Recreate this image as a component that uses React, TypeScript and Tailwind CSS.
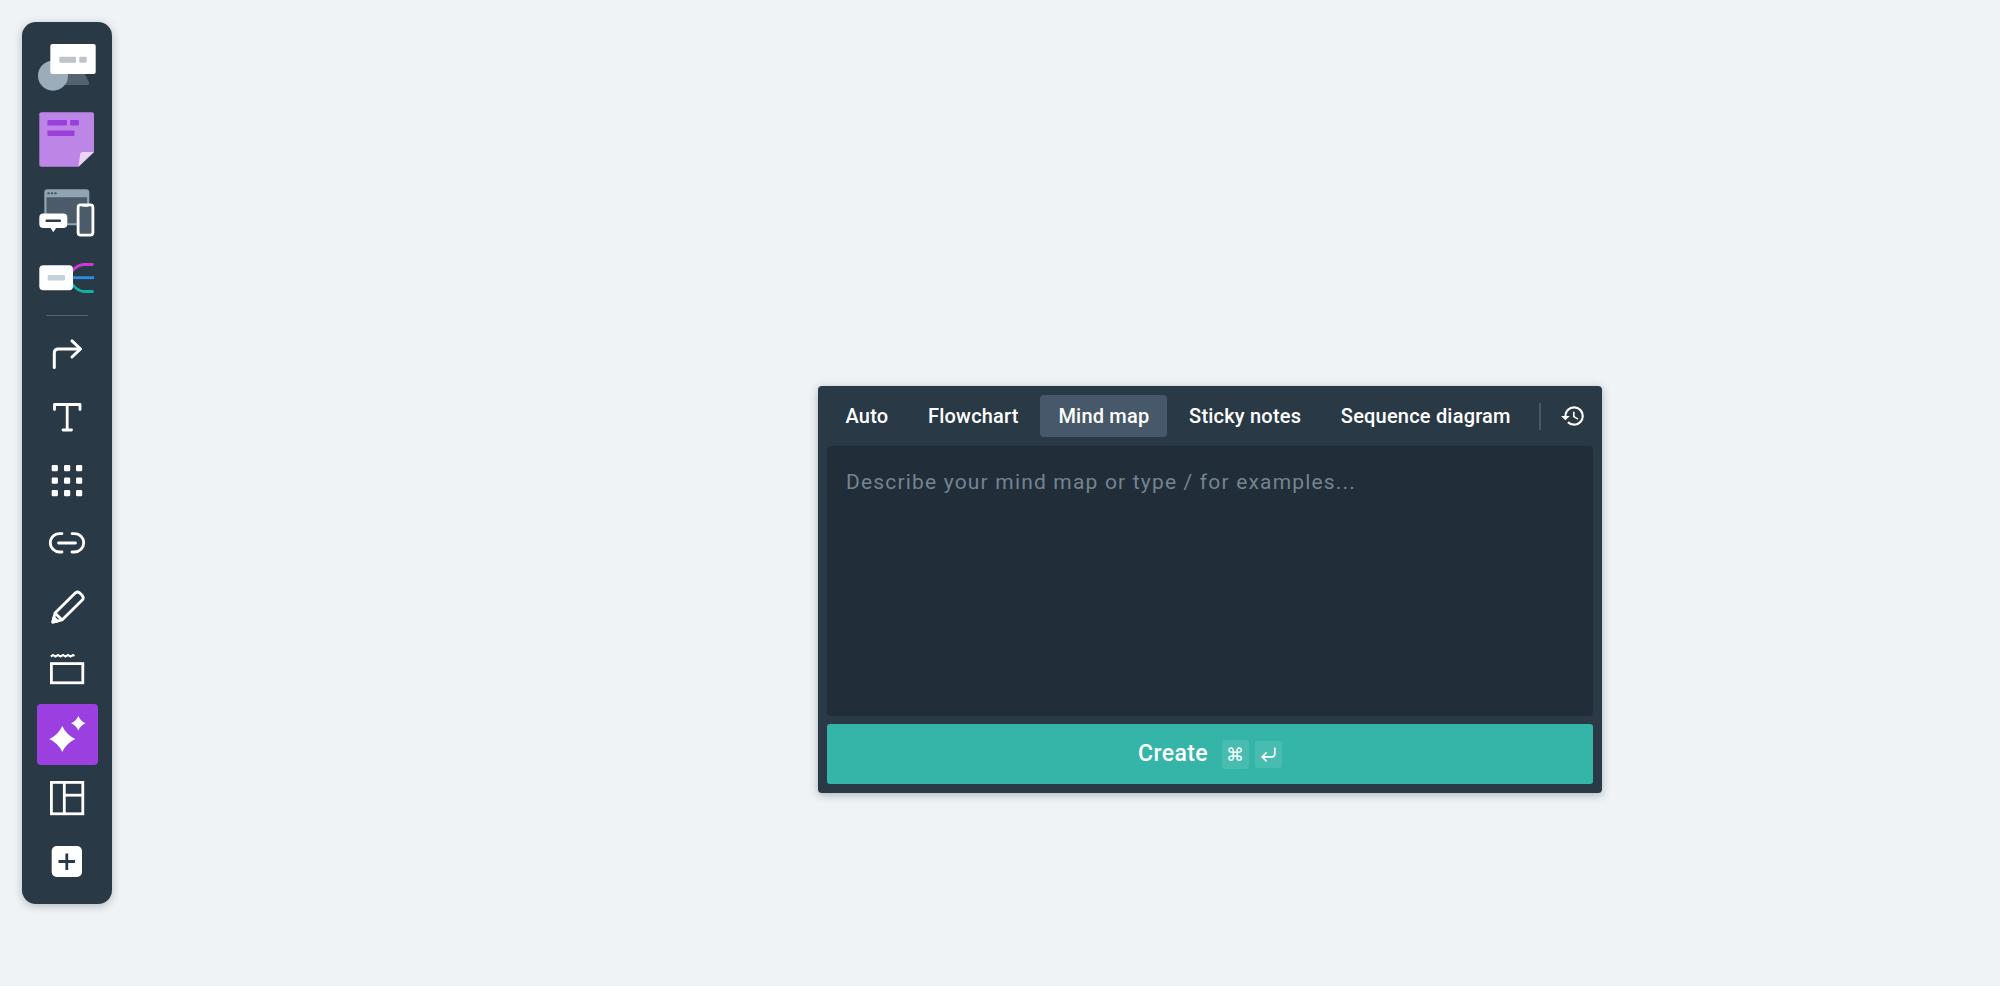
import { CornerDownLeft } from "lucide-react";
import { MdHistory } from "react-icons/md";

const tabs = ["Auto", "Flowchart", "Mind map", "Sticky notes", "Sequence diagram"];

function ShapesIcon() {
  return (
    <svg viewBox="37 43 60 48" className="block h-[48px] w-[60px]">
      <path d="M64 72 H84 L89 82.5 Q89.6 85 87 85 H64 Z" fill="#536370" />
      <circle cx="53" cy="75.7" r="15" fill="#9badba" />
      <rect x="50.3" y="44" width="45.4" height="30" rx="2" fill="#fff" />
      <rect x="59.3" y="56.7" width="16.7" height="6" rx="1" fill="#bdc4ca" />
      <rect x="79.3" y="56.7" width="7.4" height="6" rx="1" fill="#bdc4ca" />
    </svg>
  );
}

function StickyIcon() {
  return (
    <svg viewBox="37 112 60 55" className="mt-[21px] block h-[55px] w-[60px]">
      <path d="M41.3 112.3 H92 a2 2 0 0 1 2 2 V152 L78.5 166.7 H41.3 a2 2 0 0 1 -2 -2 V114.3 a2 2 0 0 1 2 -2 Z" fill="#bd86e6" />
      <path d="M94 152 L78.5 166.7 L80 155 Q80.3 152 83 152 Z" fill="#ecd4f8" />
      <rect x="47.3" y="120" width="19.7" height="5.6" rx="1" fill="#9a3fdb" />
      <rect x="70" y="120" width="9" height="5.6" rx="1" fill="#9a3fdb" />
      <rect x="47.3" y="130.5" width="27.2" height="5.6" rx="1" fill="#9a3fdb" />
    </svg>
  );
}

function DevicesIcon() {
  return (
    <svg viewBox="37 189 60 47.5" className="mt-[22px] block h-[48px] w-[60px]">
      <rect x="44.3" y="189" width="45" height="36" rx="3" fill="#91a4b3" />
      <rect x="46.5" y="197" width="40.6" height="26" fill="#4b5b69" />
      <circle cx="48.5" cy="193" r="1.2" fill="#4b5b69" />
      <circle cx="52" cy="193" r="1.2" fill="#4b5b69" />
      <circle cx="55.5" cy="193" r="1.2" fill="#4b5b69" />
      <rect x="78.1" y="204.7" width="14.8" height="30.1" rx="2.5" fill="#4b5b69" stroke="#fff" strokeWidth="2.8" />
      <rect x="82.5" y="204.5" width="6" height="2" fill="#fff" />
      <rect x="39.3" y="213.3" width="28" height="14.4" rx="4" fill="#fff" />
      <path d="M50 227 L53.3 232 L56.6 227 Z" fill="#fff" />
      <rect x="45.5" y="219.2" width="15.5" height="2.6" rx="1" fill="#2c3b48" />
    </svg>
  );
}

function MindMapIcon() {
  return (
    <svg viewBox="37 262 60 30" className="mt-[26px] block h-[30px] w-[60px]">
      <path d="M72 270 Q78 263.5 84 263.5 H93.5" fill="none" stroke="#d136d6" strokeWidth="2.8" />
      <path d="M72 276.7 H94" fill="none" stroke="#2a8fe8" strokeWidth="2.8" />
      <path d="M72 283 Q78 290.5 84 290.5 H93.5" fill="none" stroke="#10b3a3" strokeWidth="2.8" />
      <rect x="39.3" y="264.3" width="33.7" height="25" rx="4" fill="#fff" />
      <rect x="47.7" y="274" width="17.3" height="5.6" rx="1" fill="#c5d0dc" />
    </svg>
  );
}

function ArrowIcon() {
  return (
    <svg viewBox="37 322 60 60" className="block h-[60px] w-[60px]" fill="none" stroke="#fff" strokeWidth="3" strokeLinecap="round" strokeLinejoin="round">
      <path d="M54.3 366.5 V352 Q54.3 348 58.3 348 H80" />
      <path d="M72 339.8 L80.5 348 L72 356" />
    </svg>
  );
}

function TextIcon() {
  return (
    <svg viewBox="37 386 60 60" className="block h-[60px] w-[60px]" fill="none" stroke="#fff" strokeWidth="2.8" strokeLinecap="round" strokeLinejoin="round">
      <path d="M54.5 409.5 V404.5 H80 V409.5" />
      <path d="M67.2 404.5 V429.5" />
      <path d="M63 430 H71.5" />
    </svg>
  );
}

function GridIcon() {
  const spots = [51.7, 64, 76];
  const rows = [465, 477.5, 490];
  return (
    <svg viewBox="37 450 60 60" className="block h-[60px] w-[60px]" fill="#fff">
      {rows.map((y) =>
        spots.map((x) => <rect key={`${x}-${y}`} x={x} y={y} width="6.2" height="6.2" rx="1.2" />)
      )}
    </svg>
  );
}

function LinkIcon() {
  return (
    <svg viewBox="37 514 60 60" className="block h-[60px] w-[60px]" fill="none" stroke="#fff" strokeWidth="2.8" strokeLinecap="round">
      <path d="M62 534.6 H59.5 a9.2 9.2 0 0 0 0 18.4 H62" />
      <path d="M72 534.6 H74.5 a9.2 9.2 0 0 1 0 18.4 H72" />
      <path d="M58.5 544 H75.5" />
    </svg>
  );
}

function PencilIcon() {
  return (
    <svg viewBox="37 577 60 60" className="block h-[60px] w-[60px]" fill="none" stroke="#fff" strokeWidth="2.8" strokeLinejoin="round">
      <path d="M52.8 622.2 L55 613 L75.5 592.8 Q77.5 591.2 79.5 592.8 L82.5 595.8 Q84 597.8 82.5 599.8 L62 620 Z" />
      <path d="M55 613 L62 620" />
      <path d="M52.8 622.2 L53.8 617.6 L57.4 621.1 Z" fill="#fff" />
    </svg>
  );
}

function FrameIcon() {
  return (
    <svg viewBox="37 641 60 60" className="block h-[60px] w-[60px]" fill="none" stroke="#fff" strokeWidth="2.8">
      <rect x="51.4" y="664.6" width="31.4" height="19.2" />
      <path d="M50.8 657.6 L53 656 L55.5 657.6 L58 656 L60.5 657.6 L63 656 L65.5 657.6 L68 656 L70.5 657.6 L73 656 L74.5 657" strokeWidth="2" />
    </svg>
  );
}

function SparkIcon() {
  return (
    <svg viewBox="37 704 60 60" className="block h-[60px] w-[60px]" fill="#fff">
      <path d="M62.3 726 Q66.4 734.9 75.3 739 Q66.4 743.1 62.3 752 Q58.2 743.1 49.3 739 Q58.2 734.9 62.3 726 Z" />
      <path d="M78.3 716 Q80.4 721.2 85.5 723.3 Q80.4 725.4 78.3 730.6 Q76.2 725.4 71.1 723.3 Q76.2 721.2 78.3 716 Z" />
    </svg>
  );
}

function LayoutIcon() {
  return (
    <svg viewBox="37 768 60 60" className="block h-[60px] w-[60px]" fill="none" stroke="#fff" strokeWidth="2.8">
      <rect x="51.4" y="782.4" width="31.4" height="31.4" />
      <path d="M64.3 782.4 V813.8" />
      <path d="M64.3 795.2 H82.8" />
    </svg>
  );
}

function PlusIcon() {
  return (
    <svg viewBox="37 832 60 60" className="block h-[60px] w-[60px]">
      <rect x="51.7" y="846" width="30.3" height="31" rx="5" fill="#fff" />
      <path d="M58.5 861.5 H75 M66.8 853.5 V870" stroke="#2a3946" strokeWidth="2.8" fill="none" />
    </svg>
  );
}

export default function App() {
  return (
    <main
      className="flex h-screen items-start overflow-hidden bg-[#eff3f6] pl-[22px] pt-[22px]"
      style={{ fontFamily: 'Roboto, "Liberation Sans", sans-serif' }}
    >
      <aside className="flex h-[882px] w-[90px] shrink-0 flex-col items-center rounded-[14px] bg-[#2a3946] pt-[21px] shadow-[0_2px_8px_rgba(42,57,70,0.3)]">
        <ShapesIcon />
        <StickyIcon />
        <DevicesIcon />
        <MindMapIcon />
        <div className="mb-[7px] mt-[22px] h-px w-[42px] shrink-0 bg-[#56646f]" />
        <div className="flex flex-col items-center gap-[3.45px]">
          <ArrowIcon />
          <TextIcon />
          <GridIcon />
          <LinkIcon />
          <PencilIcon />
          <FrameIcon />
          <div className="flex h-[61px] w-[61px] items-center justify-center rounded-[4px] bg-[#9b3fe0]">
            <SparkIcon />
          </div>
          <LayoutIcon />
          <PlusIcon />
        </div>
      </aside>

      <section className="ml-[706px] mt-[364px] flex h-[407px] w-[784px] shrink-0 flex-col rounded-[4px] bg-[#2a3946] p-[9px] shadow-[0_2px_8px_rgba(42,57,70,0.35)]">
        <div className="flex h-[42px] shrink-0 items-center gap-[3.7px] pl-[0.5px]">
          {tabs.map((tab) => (
            <button
              key={tab}
              className={
                tab === "Mind map"
                  ? "h-[42px] rounded-[4px] bg-[#47586a] px-[18px] text-[20px] font-medium tracking-[0.2px] text-white"
                  : "h-[42px] rounded-[4px] px-[18px] text-[20px] font-medium tracking-[0.2px] text-white"
              }
            >
              {tab}
            </button>
          ))}
          <div className="ml-[7px] h-[27px] w-[2px] bg-[#47586a]" />
          <MdHistory size={26} className="ml-[15px] text-white" />
        </div>
        <textarea
          placeholder="Describe your mind map or type / for examples..."
          className="mt-[9px] h-[270px] w-full shrink-0 resize-none rounded-[4px] bg-[#222d3a] px-[19px] py-[24px] text-[21px] leading-[24px] tracking-[1.18px] text-white outline-none placeholder:text-[#74848f]"
        />
        <button className="mt-[8px] flex h-[60px] shrink-0 items-center justify-center rounded-[3px] bg-[#34b5a8] text-[23px] font-medium tracking-[0.4px] text-white">
          <span>Create</span>
          <span className="ml-[14px] flex h-[29px] w-[27px] items-center justify-center rounded-[3px] bg-white/10 text-[18px]">⌘</span>
          <span className="ml-[6px] flex h-[27px] w-[27px] items-center justify-center rounded-[3px] bg-white/10">
            <CornerDownLeft size={19} strokeWidth={2} />
          </span>
        </button>
      </section>
    </main>
  );
}
